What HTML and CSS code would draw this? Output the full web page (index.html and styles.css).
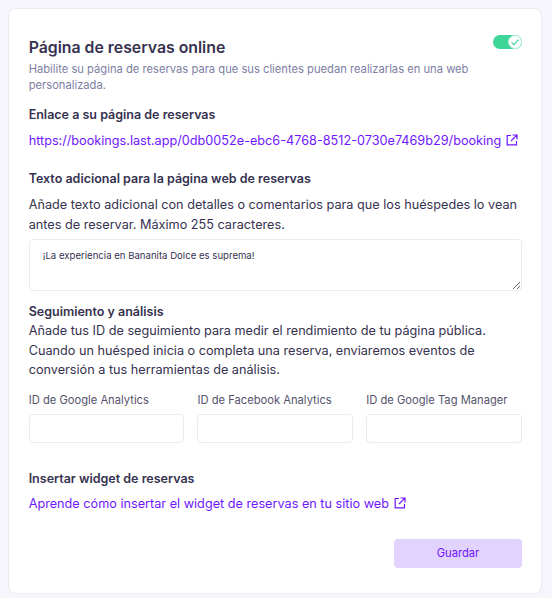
FILE: index.html
```html
<!DOCTYPE html>
<html>
<head>
    <title>Página de reservas online</title>
    <link rel="stylesheet" href="styles.css">
</head>
<body>

<div class="card">
    <div class="header">
        <div>
            <h1>Página de reservas online</h1>
            <p class="subtitle">Habilite su página de reservas para que sus clientes puedan realizarlas en una web personalizada.</p>
        </div>
        <div class="toggle">
            <span class="knob">
                <svg width="10" height="10" viewBox="0 0 10 10"><path d="M1.5 5.3 4 7.6 8.6 2.6" fill="none" stroke="#3dd598" stroke-width="1.1"/></svg>
            </span>
        </div>
    </div>

    <h2 class="link-title">Enlace a su página de reservas</h2>
    <a class="link booking-link" href="#">https://bookings.last.app/0db0052e-ebc6-4768-8512-0730e7469b29/booking
        <svg class="ext" width="12" height="12" viewBox="0 0 12 12"><path d="M5 1.5H1.2v9.3h9.3V7M6.5 1h4.5v4.5M10.8 1.2 5 7" fill="none" stroke="currentColor" stroke-width="1.2"/></svg>
    </a>

    <h2 class="extra-title">Texto adicional para la página web de reservas</h2>
    <p class="text">Añade texto adicional con detalles o comentarios para que los huéspedes lo vean antes de reservar. Máximo 255 caracteres.</p>
    <textarea class="note">¡La experiencia en Bananita Dolce es suprema!</textarea>

    <h2 class="tracking-title">Seguimiento y análisis</h2>
    <p class="text">Añade tus ID de seguimiento para medir el rendimiento de tu página pública. Cuando un huésped inicia o completa una reserva, enviaremos eventos de conversión a tus herramientas de análisis.</p>

    <div class="fields">
        <div class="field">
            <label for="ga">ID de Google Analytics</label>
            <input type="text" id="ga">
        </div>
        <div class="field">
            <label for="fb">ID de Facebook Analytics</label>
            <input type="text" id="fb">
        </div>
        <div class="field">
            <label for="gtm">ID de Google Tag Manager</label>
            <input type="text" id="gtm">
        </div>
    </div>

    <h2 class="widget-title">Insertar widget de reservas</h2>
    <a class="link widget-link" href="#">Aprende cómo insertar el widget de reservas en tu sitio web
        <svg class="ext" width="12" height="12" viewBox="0 0 12 12"><path d="M5 1.5H1.2v9.3h9.3V7M6.5 1h4.5v4.5M10.8 1.2 5 7" fill="none" stroke="currentColor" stroke-width="1.2"/></svg>
    </a>

    <div class="actions">
        <button>Guardar</button>
    </div>
</div>

</body>
</html>
```

FILE: styles.css
```css
* {
    box-sizing: border-box;
}
body {
    margin: 0;
    padding: 8px 10px 0 7.67px;
    height: 598px;
    overflow: hidden;
    background-color: #f5f5fb;
    font-family: Inter, sans-serif;
    color: #36324f;
}
.card {
    height: 586px;
    padding: 26px 19px 0 20px;
    background-color: #fff;
    border: 1px solid #ebebf3;
    border-radius: 8px;
}
.header {
    display: flex;
    justify-content: space-between;
    align-items: flex-start;
}
h1 {
    margin: 0;
    padding-top: 3px;
    font-size: 15.84px;
    line-height: 20px;
    font-weight: 600;
}
.subtitle {
    margin: 3px 0 0 0;
    width: 450px;
    font-size: 11.2px;
    line-height: 16px;
    color: #7d80a3;
}
.toggle {
    position: relative;
    flex: none;
    width: 29px;
    height: 14px;
    background-color: #3dd598;
    border-radius: 7px;
}
.knob {
    position: absolute;
    top: 0;
    right: 0;
    width: 14px;
    height: 14px;
    display: flex;
    align-items: center;
    justify-content: center;
    background-color: #fff;
    border: 1px solid #b5eed6;
    border-radius: 50%;
}
h2 {
    margin: 0;
    font-size: 12.5px;
    line-height: 18px;
    font-weight: 600;
}
.link-title {
    margin-top: 13px;
}
.link {
    display: block;
    font-size: 12.68px;
    line-height: 18px;
    color: #6f17ff;
    text-decoration: none;
    white-space: nowrap;
}
.ext {
    vertical-align: -1px;
    margin-left: 1px;
}
.booking-link {
    margin-top: 8px;
}
.extra-title {
    margin-top: 20px;
}
.text {
    margin: 0;
    font-size: 12.68px;
    line-height: 19.6px;
}
.extra-title + .text {
    margin-top: 7px;
}
.note {
    display: block;
    width: 100%;
    height: 52px;
    margin-top: 5px;
    padding: 10px 13px;
    border: 1px solid #ebebf3;
    border-radius: 4px;
    font-family: Inter, sans-serif;
    font-size: 9.6px;
    color: #36324f;
    outline: none;
}
.tracking-title {
    margin-top: 12px;
}
.fields {
    display: flex;
    gap: 13px;
    margin-top: 12px;
}
.field {
    flex: 1;
}
label {
    display: block;
    margin-bottom: 6px;
    font-size: 11.2px;
    line-height: 16px;
    color: #55536c;
    white-space: nowrap;
}
input[type="text"] {
    width: 100%;
    height: 29px;
    border: 1px solid #ebebf3;
    border-radius: 4px;
}
.widget-title {
    margin-top: 27px;
}
.widget-link {
    margin-top: 7px;
}
.actions {
    display: flex;
    justify-content: flex-end;
    margin-top: 26px;
}
button {
    width: 128px;
    height: 29px;
    background-color: #e2d2fe;
    color: #6f17ff;
    border: none;
    border-radius: 4px;
    font-family: Inter, sans-serif;
    font-size: 11.2px;
}
```
